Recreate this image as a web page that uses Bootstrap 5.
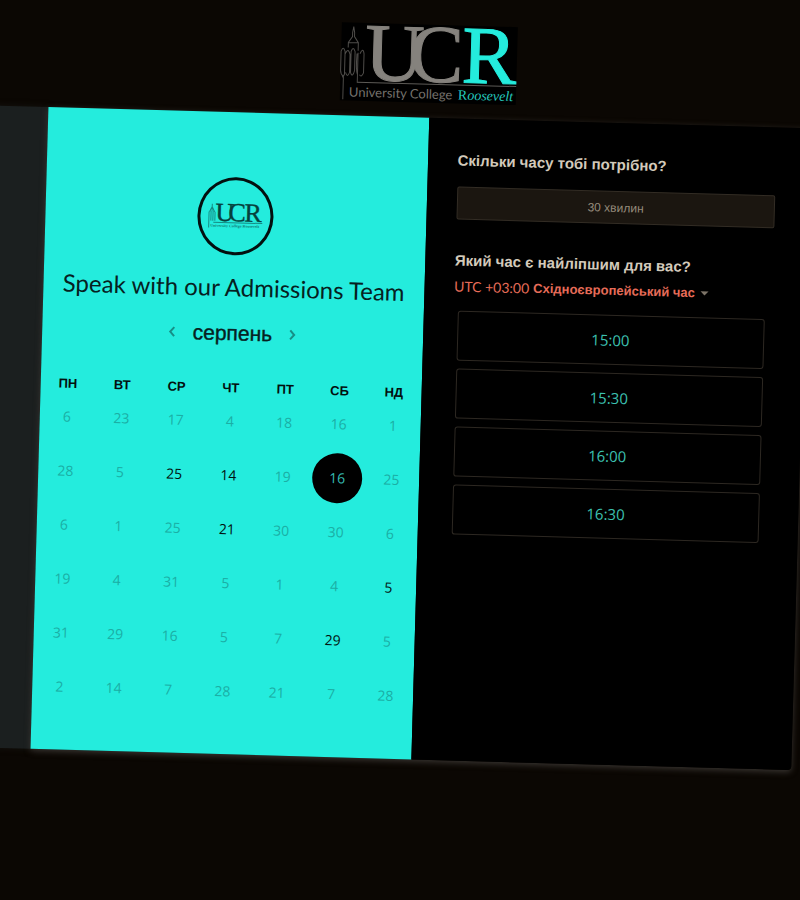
<!DOCTYPE html>
<html lang="uk">
<head>
<meta charset="utf-8">
<meta name="viewport" content="width=device-width, initial-scale=1">
<title>University College Roosevelt</title>
<link href="https://cdn.jsdelivr.net/npm/bootstrap@5.3.0/dist/css/bootstrap.min.css" rel="stylesheet">
<style>
  html { background: #0b0703; }
  body { background: #0b0703; font-family: "Liberation Sans", Arial, sans-serif; overflow: hidden; }
  svg { overflow: visible; }
  .page-tilt { min-height: 100vh; transform: rotate(1.6deg); padding-top: 24px; }
  .brand-row { padding-left: 36px; margin-bottom: 15px; }
  .side-band { width: 69px; margin-left: -30px; background: #1b1f1f; box-shadow: 0 0 6px #15130f; }
  .booking { box-shadow: 0 2px 6px #3a3632; min-height: 642px; border-radius: 0 4px 4px 0; z-index: 1; }
  .pane-date { background: #24ecdd; color: #06211f; padding-top: 65px; padding-bottom: 32px; }
  .pane-time { background: #000; border-radius: 0 4px 4px 0; padding: 30px 32px 30px 30px; }
  .avatar-ring { width: 76px; height: 78px; border: 3px solid #03100f; margin-bottom: 14px; }
  .team-title { font: 400 24px/36px Lato, sans-serif; margin-bottom: 14px; }
  .month-name { font-size: 21px; line-height: 28px; width: 84px; -webkit-text-stroke: 0.400px #06211f; }
  .month-row { gap: 8px; margin-bottom: 35px; }
  .arrow { border: 0; background: none; padding: 0; width: 20px; height: 24px; color: #178f86; display: flex; align-items: center; justify-content: center; }
  .days { table-layout: fixed; width: 100%; text-align: center; }
  .days th { font-size: 13px; line-height: 12px; padding: 0; color: #03100f; }
  .days td { height: 54px; padding: 0; vertical-align: middle; }
  .day { width: 50px; height: 50px; border: 0; border-radius: 50%; background: none; padding: 0; font: 400 14px/20px "Open Sans", sans-serif; color: #03201e; }
  .day:disabled { color: #1bafa5; }
  .day.open-day { font-weight: 500; color: #021210; }
  .day.chosen { background: #000; color: #35b9b0; }
  .ask { font-size: 15px; line-height: 24px; font-weight: 700; color: #d3cabb; margin: 0; }
  .length-btn { height: 33px; background: #1b1610; border: 1px solid #332d25; border-radius: 2px; color: #958b7b; font-size: 12px; margin: 14px 0 29px; }
  .zone { border: 0; background: none; padding: 0; color: #e66c58; font-size: 13px; line-height: 20px; font-weight: 700; margin: 4px 0 14px; }
  .zone-utc { font: 400 14px/20px Lato, sans-serif; }
  .zone-caret { border: 4px solid transparent; border-top-color: #7d7468; border-bottom: 0; margin-left: 6px; }
  .slots { gap: 8px; padding: 0 7px 0 4px; }
  .slot { height: 50px; border: 1px solid #2d2822; border-radius: 3px; background: #000; color: #3cc0b0; font: 400 15px/22px "Open Sans", sans-serif; }
</style>
</head>
<body>
<div class="page-tilt">
  <header class="brand-row d-flex justify-content-center">
    <svg width="176" height="78" viewBox="0 0 176 78" role="img" aria-label="UCR University College Roosevelt">
      <rect width="176" height="78" fill="#000"/>
      <g fill="none" stroke="#4e4c49" stroke-width="1">
        <path d="M3 77V54Q0 52 0 48V29Q2 23 4 29V52Q2 56 2 54M4 32Q7 24 9 32V50Q7 56 5 50M10 50V29Q12 23 14 29V48Q12 56 10 50M17 60V52Q15 48 16 31M19 31Q22 24 23 31V50Q21 55 19 52M17 60V30M7 25V20L11 14V10L12 4L13 10V14L17 20V28M7 20H17"/>
        <path d="M17 59.500H176" stroke="#5c5a56"/>
      </g>
      <g font-family="Liberation Serif, serif" font-size="82" stroke-width="1">
        <text x="24" y="57" fill="#85827d" stroke="#85827d">U</text>
        <text x="68" y="57" fill="#85827d" stroke="#85827d">C</text>
        <text x="121" y="57" fill="#24ecdd" stroke="#24ecdd">R</text>
      </g>
      <text x="9" y="74" font-family="Lato, sans-serif" font-size="13" fill="#75726d">University College</text>
      <text x="118" y="74" font-family="Liberation Serif, serif" font-size="14" fill="#24c9be">R<tspan font-style="italic">oosevelt</tspan></text>
    </svg>
  </header>
  <div class="d-flex">
    <div class="side-band flex-shrink-0"></div>
    <main class="booking row g-0 flex-grow-1 position-relative">
      <section class="pane-date col-6 d-flex flex-column align-items-center">
        <div class="avatar-ring rounded-circle d-flex align-items-center justify-content-center">
          <svg width="56" height="26" viewBox="0 0 56 26" role="img" aria-label="UCR">
            <g stroke="#168a82" stroke-width="1" fill="none"><path d="M1.500 25V9M3.500 18V8M5.500 18V8M7.500 18V9M4.500 8V1M2 9L4.500 4L7 9M6 19.500H55"/></g>
            <g font-family="Liberation Serif, serif" font-size="26" fill="#06403c" stroke="#06403c" stroke-width="0.400">
              <text x="8" y="18">U</text><text x="21" y="18">C</text><text x="37" y="18">R</text>
            </g>
            <text x="3" y="24" font-family="Liberation Serif, serif" font-size="4" font-weight="700" fill="#157a73">University College Roosevelt</text>
          </svg>
        </div>
        <h1 class="team-title text-nowrap">Speak with our Admissions Team</h1>
        <div class="month-row d-flex align-items-center justify-content-center">
          <button class="arrow" type="button" aria-label="Попередній місяць"><svg width="8" height="12" viewBox="0 0 8 12" fill="none" stroke="currentColor" stroke-width="2"><path d="M6 1.500L2 6L6 10.500"/></svg></button>
          <span class="month-name text-center">серпень</span>
          <button class="arrow" type="button" aria-label="Наступний місяць"><svg width="8" height="12" viewBox="0 0 8 12" fill="none" stroke="currentColor" stroke-width="2"><path d="M2 1.500L6 6L2 10.500"/></svg></button>
        </div>
        <table class="days">
          <thead><tr><th scope="col">ПН</th><th scope="col">ВТ</th><th scope="col">СР</th><th scope="col">ЧТ</th><th scope="col">ПТ</th><th scope="col">СБ</th><th scope="col">НД</th></tr></thead>
          <tbody>
            <tr><td><button class="day" disabled>6</button></td><td><button class="day" disabled>23</button></td><td><button class="day" disabled>17</button></td><td><button class="day" disabled>4</button></td><td><button class="day" disabled>18</button></td><td><button class="day" disabled>16</button></td><td><button class="day" disabled>1</button></td></tr>
            <tr><td><button class="day" disabled>28</button></td><td><button class="day" disabled>5</button></td><td><button class="day open-day">25</button></td><td><button class="day open-day">14</button></td><td><button class="day" disabled>19</button></td><td><button class="day chosen">16</button></td><td><button class="day" disabled>25</button></td></tr>
            <tr><td><button class="day" disabled>6</button></td><td><button class="day" disabled>1</button></td><td><button class="day" disabled>25</button></td><td><button class="day open-day">21</button></td><td><button class="day" disabled>30</button></td><td><button class="day" disabled>30</button></td><td><button class="day" disabled>6</button></td></tr>
            <tr><td><button class="day" disabled>19</button></td><td><button class="day" disabled>4</button></td><td><button class="day" disabled>31</button></td><td><button class="day" disabled>5</button></td><td><button class="day" disabled>1</button></td><td><button class="day" disabled>4</button></td><td><button class="day open-day">5</button></td></tr>
            <tr><td><button class="day" disabled>31</button></td><td><button class="day" disabled>29</button></td><td><button class="day" disabled>16</button></td><td><button class="day" disabled>5</button></td><td><button class="day" disabled>7</button></td><td><button class="day open-day">29</button></td><td><button class="day" disabled>5</button></td></tr>
            <tr><td><button class="day" disabled>2</button></td><td><button class="day" disabled>14</button></td><td><button class="day" disabled>7</button></td><td><button class="day" disabled>28</button></td><td><button class="day" disabled>21</button></td><td><button class="day" disabled>7</button></td><td><button class="day" disabled>28</button></td></tr>
          </tbody>
        </table>
      </section>
      <section class="pane-time col-6">
        <h2 class="ask">Скільки часу тобі потрібно?</h2>
        <button class="length-btn w-100 d-block" type="button">30 хвилин</button>
        <h2 class="ask">Який час є найліпшим для вас?</h2>
        <button class="zone d-flex align-items-center text-nowrap" type="button"><span class="zone-utc me-1">UTC +03:00</span><span>Східноєвропейський час</span><span class="zone-caret"></span></button>
        <div class="slots d-flex flex-column">
          <button class="slot" type="button">15:00</button>
          <button class="slot" type="button">15:30</button>
          <button class="slot" type="button">16:00</button>
          <button class="slot" type="button">16:30</button>
        </div>
      </section>
    </main>
  </div>
</div>
<script src="https://cdn.jsdelivr.net/npm/bootstrap@5.3.0/dist/js/bootstrap.bundle.min.js"></script>
</body>
</html>
